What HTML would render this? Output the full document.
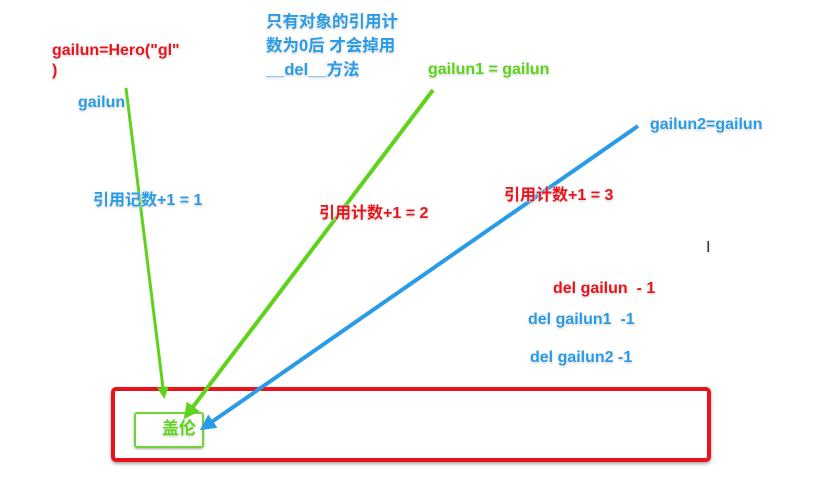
<!DOCTYPE html>
<html><head><meta charset="utf-8"><style>
body{margin:0;width:826px;height:487px;background:#fff;position:relative;overflow:hidden;font-family:"Liberation Sans","Noto Sans CJK SC",sans-serif;font-weight:bold;font-size:16px}
.t{position:absolute;white-space:nowrap;line-height:20px;text-shadow:0 0 2px #fff,0 1px 2px #bbb}
.r{color:#e8141c}.b{color:#2a9be6}.g{color:#5fd31c}
</style></head><body>
<div style="position:absolute;left:111px;top:387px;width:592px;height:67px;border:4px solid #e8141c;border-radius:5px;box-shadow:0 2px 3px #aaa"></div>
<div style="position:absolute;left:134px;top:412px;width:66px;height:32px;border:2px solid #6fd33a;border-radius:3px;box-shadow:0 1px 2px #aaa"></div>
<svg width="826" height="487" style="position:absolute;left:0;top:0">
<defs>
<marker id="mg" markerWidth="4" markerHeight="4" refX="3" refY="2" orient="auto"><path d="M0,0L4,2L0,4z" fill="#5fd31c"/></marker>
<marker id="mb" markerWidth="4" markerHeight="4" refX="3" refY="2" orient="auto"><path d="M0,0L4,2L0,4z" fill="#2a9be6"/></marker>
</defs>
<line x1="126" y1="88" x2="164" y2="396" stroke="#5fd31c" stroke-width="3" marker-end="url(#mg)"/>
<line x1="433" y1="90" x2="186" y2="416" stroke="#5fd31c" stroke-width="4" marker-end="url(#mg)"/>
<line x1="638" y1="126" x2="203" y2="428" stroke="#2a9be6" stroke-width="4" marker-end="url(#mb)"/>
</svg>
<div class="t r" style="left:52px;top:41px">gailun=Hero("gl"<br>)</div>
<div class="t b" style="left:78px;top:93px">gailun</div>
<div class="t b" style="left:266px;top:10px;line-height:24px;font-size:16.5px">只有对象的引用计<br>数为0后 才会掉用<br>__del__方法</div>
<div class="t g" style="left:428px;top:60px">gailun1 = gailun</div>
<div class="t b" style="left:650px;top:115px">gailun2=gailun</div>
<div class="t b" style="left:93px;top:191px">引用记数+1 = 1</div>
<div class="t r" style="left:319px;top:204px">引用计数+1 = 2</div>
<div class="t r" style="left:504px;top:186px">引用计数+1 = 3</div>
<div class="t" style="left:706px;top:238px;font-weight:normal;color:#333">I</div>
<div class="t r" style="left:553px;top:279px">del gailun &nbsp;- 1</div>
<div class="t b" style="left:528px;top:310px">del gailun1 &nbsp;-1</div>
<div class="t b" style="left:530px;top:348px">del gailun2 -1</div>
<div class="t g" style="left:162px;top:419px;font-size:17px">盖伦</div>
</body></html>
